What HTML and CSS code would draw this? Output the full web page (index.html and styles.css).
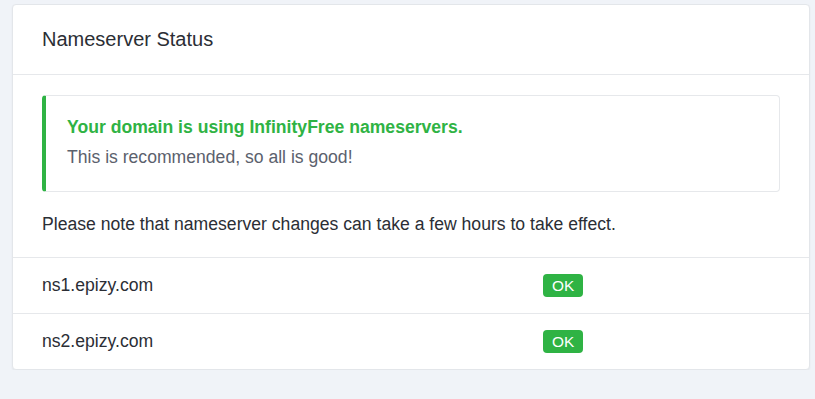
FILE: index.html
```html
<!DOCTYPE html>
<html lang="en">
<head>
    <meta charset="UTF-8">
    <meta name="viewport" content="width=device-width, initial-scale=1.0">
    <title>Nameserver Status</title>
    <link rel="stylesheet" href="styles.css">
</head>
<body>

    <div class="card">
        <div class="card-header">Nameserver Status</div>

        <div class="card-body">
            <div class="callout">
                <div class="callout-title">Your domain is using InfinityFree nameservers.</div>
                <div class="callout-text">This is recommended, so all is good!</div>
            </div>
            <p class="note">Please note that nameserver changes can take a few hours to take effect.</p>
        </div>

        <!-- Nameserver list -->
        <div class="ns-row">
            <span>ns1.epizy.com</span>
            <span><span class="badge">OK</span></span>
        </div>
        <div class="ns-row">
            <span>ns2.epizy.com</span>
            <span><span class="badge">OK</span></span>
        </div>
    </div>

</body>
</html>
```

FILE: styles.css
```css
/* General Styling */
body {
    margin: 0;
    padding: 4px 5px 0 12px;
    font-family: Arial, "Liberation Sans", sans-serif;
    background-color: #f0f3f8;
    color: #2b2e35;
}

.card {
    background: white;
    border: 1px solid #e3e6ea;
    border-radius: 4px;
    box-shadow: 0 1px 2px rgba(0,0,0,0.05);
}

.card-header {
    height: 69px;
    display: flex;
    align-items: center;
    padding: 0 29px;
    font-size: 20px;
    border-bottom: 1px solid #e6e8eb;
}

.card-body {
    padding: 20px 29px 0;
}

/* Alert box */
.callout {
    border: 1px solid #e6e8eb;
    border-left: 4px solid #2fb344;
    border-radius: 4px;
    padding: 21px 20px 23px 21px;
}

.callout-title {
    color: #2fb344;
    font-weight: bold;
    font-size: 17.6px;
}

.callout-text {
    color: #5b616d;
    font-size: 17.6px;
    margin-top: 9px;
}

.note {
    margin: 22px 0 0;
    padding-bottom: 22px;
    font-size: 17.6px;
}

/* Table rows */
.ns-row {
    display: grid;
    grid-template-columns: 501px 1fr;
    align-items: center;
    height: 55px;
    padding: 0 29px;
    border-top: 1px solid #e6e8eb;
    font-size: 17.6px;
}

.badge {
    display: inline-block;
    background-color: #2fb344;
    color: white;
    font-size: 15.4px;
    padding: 3px 9px;
    border-radius: 4px;
    line-height: 17px;
}
```
